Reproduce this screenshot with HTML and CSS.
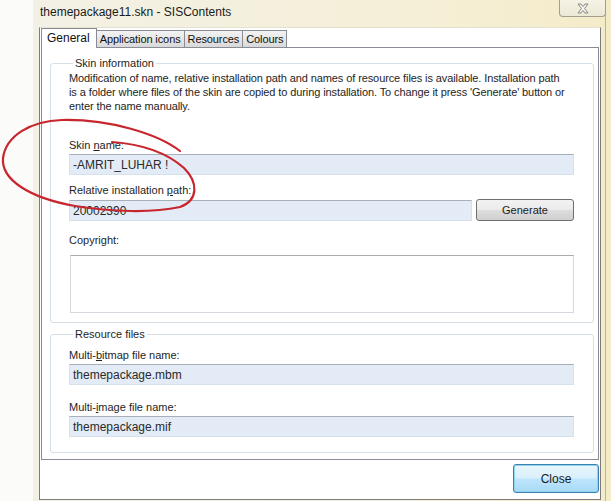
FILE: index.html
```html
<!DOCTYPE html>
<html lang="en">
<head>
    <meta charset="UTF-8">
    <title>themepackage11.skn - SISContents</title>
    <link rel="stylesheet" href="styles.css">
</head>
<body>
    <div class="window">
        <div class="titlebar">
            <span class="title">themepackage11.skn - SISContents</span>
            <div class="close-x">
                <svg width="20" height="11" viewBox="0 0 20 11">
                    <path d="M5 1 L8 1 L10 3.5 L12 1 L15 1 L11.6 5.5 L15 10 L12 10 L10 7.5 L8 10 L5 10 L8.4 5.5 Z" fill="#f4f4f0" stroke="#8a8a80" stroke-width="1"/>
                </svg>
            </div>
        </div>
        <div class="client">
            <div class="tabs">
                <div class="tab active">General</div>
                <div class="tab">Application icons</div>
                <div class="tab">Resources</div>
                <div class="tab">Colours</div>
            </div>
            <div class="panel">
                <fieldset class="group">
                    <legend>Skin information</legend>
                    <p class="desc">Modification of name, relative installation path and names of resource files is available. Installation path<br>is a folder where files of the skin are copied to during installation. To change it press 'Generate' button or<br>enter the name manually.</p>
                    <div class="field first">
                        <label>Skin <u>n</u>ame:</label>
                        <div class="input">-AMRIT_LUHAR !</div>
                    </div>
                    <div class="field">
                        <label>Relative installation <u>p</u>ath:</label>
                        <div class="row">
                            <div class="input grow">20002390</div>
                            <button class="btn">Generate</button>
                        </div>
                    </div>
                    <div class="field copy">
                        <label>Copyright:</label>
                        <div class="textarea"></div>
                    </div>
                </fieldset>
                <fieldset class="group res">
                    <legend>Resource files</legend>
                    <div class="field first">
                        <label>Multi-<u>b</u>itmap file name:</label>
                        <div class="input">themepackage.mbm</div>
                    </div>
                    <div class="field">
                        <label>Multi-<u>i</u>mage file name:</label>
                        <div class="input">themepackage.mif</div>
                    </div>
                </fieldset>
            </div>
            <div class="footer">
                <button class="btn default">Close</button>
            </div>
        </div>
    </div>

    <svg class="scribble" width="611" height="501" viewBox="0 0 611 501">
        <path d="M180 151 C158 134, 110 119, 62 120 C30 121, 6 136, 3 158 C1 180, 30 198, 75 206 C112 212, 152 213, 180 207 C199 200, 198 182, 184 168 C166 152, 140 144, 112 142" fill="none" stroke="#c8262e" stroke-width="2.2" stroke-linecap="round"/>
    </svg>
</body>
</html>
```

FILE: styles.css
```css
body {
    margin: 0;
    width: 611px;
    height: 501px;
    overflow: hidden;
    background-color: #fbfbf9;
    font-family: "Liberation Sans", Arial, sans-serif;
    font-size: 11px;
    color: #1e1e1e;
}
.window {
    margin-left: 33px;
    height: 501px;
    padding: 0 10px 0 6px;
    box-sizing: border-box;
    display: flex;
    flex-direction: column;
    background:
        linear-gradient(to right, transparent 572px, #b8b4a2 572px, #b8b4a2 573px, transparent 573px),
        linear-gradient(to right, #f3f1e6, #f5efd6 70%, #f4ebc8);
}
.titlebar {
    height: 27px;
    display: flex;
    justify-content: space-between;
    align-items: flex-start;
}
.title {
    margin-top: 5px;
    margin-left: 1px;
    font-size: 12px;
    color: #1a1a1a;
}
.close-x {
    width: 47px;
    height: 17px;
    margin-right: -5px;
    box-sizing: border-box;
    border: 1px solid #a29f92;
    border-top: none;
    border-radius: 0 0 4px 4px;
    background: linear-gradient(#f6f3e6, #ece8d6);
    display: flex;
    justify-content: center;
    align-items: center;
}
.client {
    flex: 1;
    margin-bottom: 1px;
    background-color: #fff;
    border: 1px solid #7c7c7c;
    border-top-color: #e4e1d3;
    display: flex;
    flex-direction: column;
}
.tabs {
    display: flex;
    align-items: flex-end;
    height: 19px;
    padding-left: 1px;
}
.tab {
    height: 17px;
    padding: 0 3px;
    line-height: 16px;
    letter-spacing: -0.1px;
    box-sizing: border-box;
    border: 1px solid #898c95;
    border-bottom: none;
    margin-right: -1px;
    background: linear-gradient(#f3f3f3, #e6e6e6 50%, #d9d9d9);
    color: #111;
}
.tab.active {
    height: 20px;
    margin-bottom: -1px;
    padding: 0 6px 0 5px;
    line-height: 18px;
    letter-spacing: 0;
    background: #fff;
    position: relative;
    z-index: 1;
    font-size: 12px;
}
.panel {
    height: 413px;
    margin: 0 1px;
    padding: 8px 4px 0 8px;
    box-sizing: border-box;
    border: 1px solid #898c95;
    background-color: #fff;
}
.group {
    margin: 0;
    padding: 0 19px 9px 18px;
    border: 1px solid #d5dfe5;
    border-radius: 3px;
}
.group legend {
    margin-left: 4px;
    padding: 0 2px;
    line-height: 14px;
    color: #1e1e1e;
}
.group.res {
    margin-top: 4px;
    padding-bottom: 15px;
}
.desc {
    margin: 1px 0 0;
    line-height: 14px;
    letter-spacing: -0.1px;
    white-space: nowrap;
    color: #1e1e1e;
}
.field {
    margin-top: 8px;
}
.field.first {
    margin-top: 25px;
}
.res .field {
    margin-top: 15px;
}
.res .field.first {
    margin-top: 7px;
}
.field.copy {
    margin-top: 12px;
}
.field label {
    display: block;
    line-height: 14px;
    margin-bottom: 2px;
}
.input {
    height: 21px;
    box-sizing: border-box;
    padding: 0 3px;
    line-height: 20px;
    background-color: #e3ecf6;
    border: 1px solid #d7e1ec;
    border-top-color: #a7b0ba;
    color: #2a2a2a;
    font-size: 12px;
}
.row {
    display: flex;
    align-items: center;
    gap: 4px;
}
.grow {
    flex: 1;
}
.textarea {
    height: 58px;
    box-sizing: border-box;
    margin: 8px 0 0 1px;
    border: 1px solid #d4d9df;
    border-top-color: #a8abb0;
    background-color: #fff;
}
.btn {
    font-family: inherit;
    font-size: 11px;
    color: #1a1a1a;
    height: 22px;
    width: 98px;
    padding: 0;
    border: 1px solid #707070;
    border-radius: 3px;
    background: linear-gradient(#f2f2f2, #ebebeb 48%, #dddddd 52%, #cfcfcf);
}
.footer {
    display: flex;
    justify-content: flex-end;
    padding: 4px 1px 0 0;
}
.btn.default {
    width: 86px;
    height: 29px;
    font-size: 12px;
    border-color: #3c7fb1;
    background: linear-gradient(#eaf6fd, #d9f0fc 48%, #bee6fd 52%, #a7d9f5);
    box-shadow: inset 0 0 0 1px #92d4f0;
}
.scribble {
    position: absolute;
    top: 0;
    left: 0;
    pointer-events: none;
}
```
